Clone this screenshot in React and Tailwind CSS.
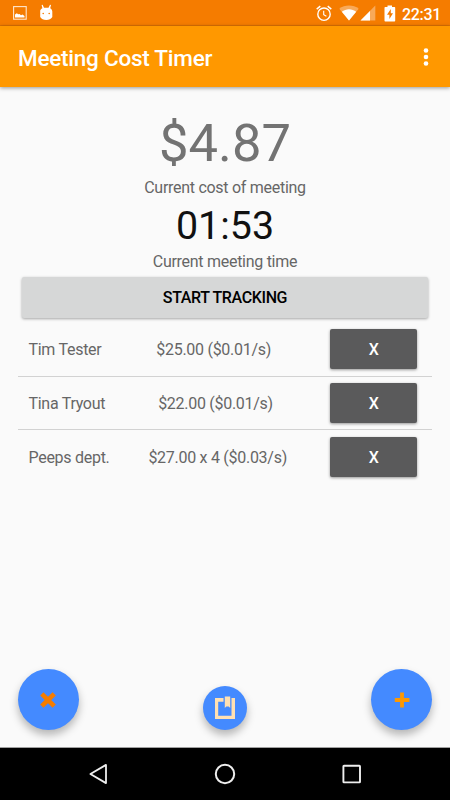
import React from 'react';

const attendees = [
  { name: 'Tim Tester', cost: '$25.00 ($0.01/s)' },
  { name: 'Tina Tryout', cost: '$22.00 ($0.01/s)' },
  { name: 'Peeps dept.', cost: '$27.00 x 4 ($0.03/s)' },
];

const StatusBar = () => (
  <div className="relative flex h-[26px] items-center bg-[#f57c00] text-white">
    <svg className="ml-[13px]" width="14" height="14" viewBox="0 0 14 14">
      <rect x="0.6" y="0.6" width="12.6" height="12.6" fill="none" stroke="#ffe6cc" strokeWidth="1.1" />
      <path d="M2 11.5V8.5l1.8-1.3 1.4 1L6.5 8l1.5 1.2 1.5-.6 2 1.4v1.5z" fill="#fff" />
    </svg>
    <svg className="ml-[12px] -mt-[2px]" width="15" height="17" viewBox="0 0 15 17">
      <path d="M1.2 6.5 C2 5 2.6 4.6 3.4 4.2 L2.6 1 L3.6 .8 L5 3.7 H9.5 L11 .8 L12 1 L11.2 4.2 C12.3 4.8 13.2 6 13.3 7.5 V13 C12.2 15 10 16 7.3 16 C4.5 16 2.3 15 1.2 13 Z" fill="#fff" />
      <circle cx="4.2" cy="9.5" r=".8" fill="#f57c00" />
      <circle cx="10.2" cy="9.5" r=".8" fill="#f57c00" />
    </svg>
    <div className="mr-[9px] ml-auto flex items-center">
      <svg className="mt-px" width="16" height="17" viewBox="0 0 16 17" fill="none" stroke="#fff" strokeWidth="1.4">
        <circle cx="8" cy="9.2" r="6.2" />
        <path d="M.7 4.1 4.3 1.1M15.3 4.1 11.7 1.1" />
        <path d="M7.7 5.8v3.8l2.7 1.7" strokeWidth="1.1" />
      </svg>
      <svg className="ml-[7px]" width="20" height="16" viewBox="0 0 20 16">
        <path d="M10 15.5 0.3 3.8C5.5-.5 14.5-.5 19.7 3.8z" fill="#fff" opacity=".35" />
        <path d="M10 15.5 2.8 6.7C6.8 3.3 13.2 3.3 17.2 6.7z" fill="#fff" />
      </svg>
      <svg className="ml-px" width="16" height="16" viewBox="0 0 16 16">
        <path d="M.5 15.5 15.3.5v15z" fill="#fff" opacity=".35" />
        <path d="M.5 15.5 10 5.9v9.6z" fill="#fff" />
      </svg>
      <svg className="ml-[8px]" width="12" height="17" viewBox="0 0 12 17">
        <path d="M3.5 .5h4.5v1.5h2.5q.7 0 .7.7v13q0 .8-.7.8h-9.3q-.7 0-.7-.8v-13q0-.7.7-.7h2.3z" fill="#fff" />
        <path d="M6.8 3.9 3 9.7h2.4v4.4L9 8.2H6.8z" fill="#f57c00" />
      </svg>
      <span className="mt-[3px] ml-[6px] text-[16px] leading-none font-medium tracking-[-0.3px]">22:31</span>
    </div>
    <div className="absolute inset-x-0 bottom-0 h-px bg-[#de7204]" />
  </div>
);

const AppBar = () => (
  <header className="relative flex h-[61px] items-center bg-[#ff9800] pr-[21px] pl-[18px] text-white shadow-[0_1px_4px_rgba(0,0,0,0.4)]">
    <h1 className="mt-[3px] text-[22.5px] leading-none font-medium tracking-[-0.24px]">Meeting Cost Timer</h1>
    <svg className="ml-auto" width="6" height="20" viewBox="0 0 6 20" fill="#fff">
      <circle cx="3" cy="3.5" r="2.3" />
      <circle cx="3" cy="10" r="2.3" />
      <circle cx="3" cy="16.5" r="2.3" />
    </svg>
  </header>
);

const AttendeeRow = ({ name, cost }) => (
  <li className="flex h-[53.7px] items-center pr-[15px] pl-[10.8px]">
    <span className="pt-[2px]">{name}</span>
    <span className="flex-1 pt-[2px] pr-[4px] text-center">{cost}</span>
    <button className="h-[40px] w-[87.5px] rounded-[2px] bg-[#5a5a5b] pt-[2px] font-medium text-white shadow-[0_1px_3px_rgba(0,0,0,0.4)]">
      X
    </button>
  </li>
);

const NavigationBar = () => (
  <nav className="flex h-[53px] items-center justify-between border-t border-[#a0a0a0] bg-black pr-[88px] pl-[89px]">
    <svg width="19" height="22" viewBox="0 0 19 22" fill="none" stroke="#eee" strokeWidth="1.8" strokeLinejoin="round">
      <path d="M17 1.9v18.2L1.4 11z" />
    </svg>
    <svg width="22" height="22" viewBox="0 0 22 22" fill="none" stroke="#eee" strokeWidth="2">
      <circle cx="11" cy="11" r="9.2" />
    </svg>
    <svg width="20" height="20" viewBox="0 0 20 20" fill="none" stroke="#eee" strokeWidth="1.9">
      <rect x="1.4" y="1.8" width="16.6" height="16.6" rx=".6" />
    </svg>
  </nav>
);

const App = () => {
  return (
    <div className="flex h-[800px] w-[450px] flex-col overflow-hidden bg-[#fafafa] font-[Roboto,sans-serif] text-[16px] tracking-[-0.28px] text-[#666]">
      <StatusBar />
      <AppBar />

      <main className="flex flex-1 flex-col px-[17.7px] pt-[25px]">
        <div className="text-center">
          <p className="h-[62px] text-[52.5px] leading-[62px] tracking-normal text-[#737373]">$4.87</p>
          <p className="h-[26px] leading-[28px]">Current cost of meeting</p>
          <p className="h-[51px] text-[39.4px] leading-[51px] tracking-normal text-[#111]">01:53</p>
          <p className="h-[20px] leading-[22px]">Current meeting time</p>
        </div>
        <button className="mx-[4px] mt-[6px] h-[40.5px] shrink-0 rounded-[2px] bg-[#d6d7d7] pt-px font-medium tracking-[-0.37px] text-black shadow-[0_1px_3px_rgba(0,0,0,0.35)]">
          START TRACKING
        </button>

        <ul className="mt-[5.5px] divide-y divide-[#d2d2d2]">
          {attendees.map((attendee) => (
            <AttendeeRow key={attendee.name} name={attendee.name} cost={attendee.cost} />
          ))}
        </ul>

        <div className="mt-auto mb-[17px] flex items-end justify-between">
          <button className="flex size-[61px] items-center justify-center rounded-full bg-[#448aff] shadow-[0_5px_9px_rgba(0,0,0,0.28)]">
            <svg width="18" height="18" viewBox="0 0 18 18" stroke="#f57c00" strokeWidth="4.6">
              <path d="M2.8 2.8 15.2 15.2M15.2 2.8 2.8 15.2" />
            </svg>
          </button>
          <button className="flex size-[44px] items-center justify-center rounded-full bg-[#448aff] shadow-[0_5px_9px_rgba(0,0,0,0.28)]">
            <svg className="overflow-visible" width="20" height="22" viewBox="0 0 20 22" fill="#ffe0b2">
              <path d="M0 1h8.5v3.7H3.2v14h13.3V1H20v21H0z" />
              <path d="M9.8-.4h5.4V11l-1.5-1.4h-2.4L9.8 11z" />
            </svg>
          </button>
          <button className="flex size-[61px] items-center justify-center rounded-full bg-[#448aff] shadow-[0_5px_9px_rgba(0,0,0,0.28)]">
            <svg width="16" height="16" viewBox="0 0 16 16" stroke="#ff9800" strokeWidth="3.8">
              <path d="M8 .6v14.8M.8 8h14.6" />
            </svg>
          </button>
        </div>
      </main>

      <NavigationBar />
    </div>
  );
};

export default App;
